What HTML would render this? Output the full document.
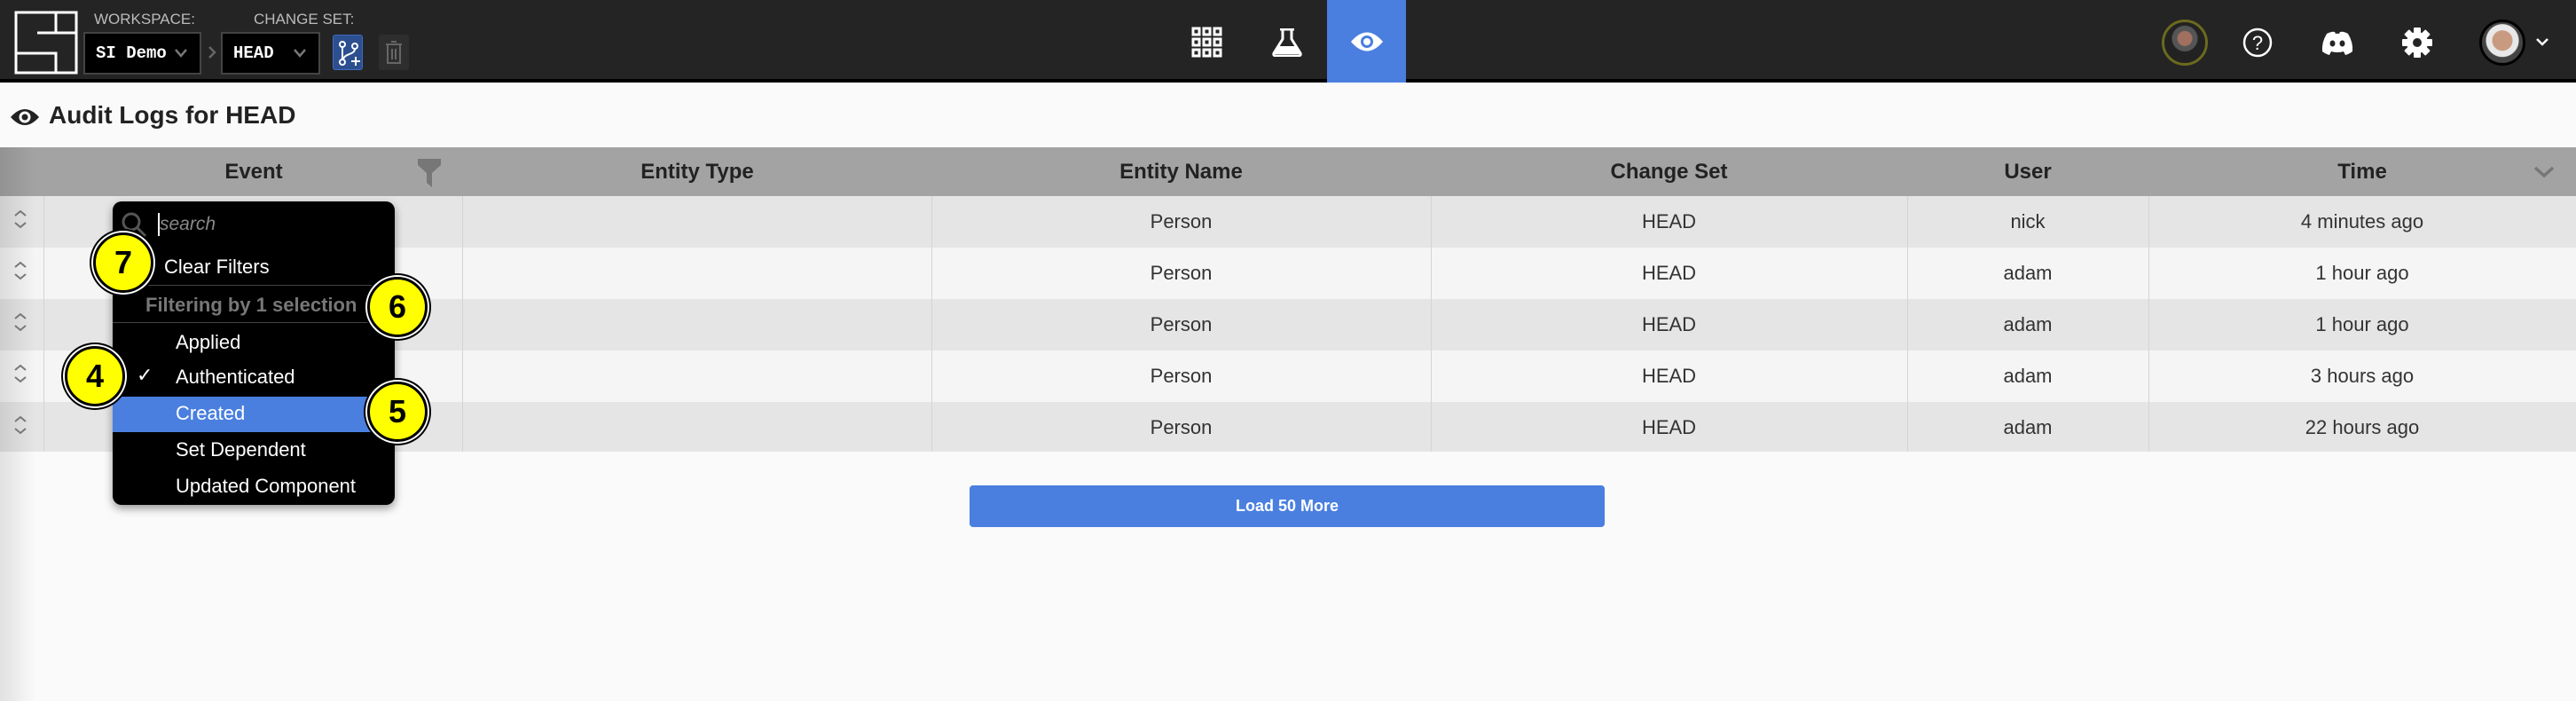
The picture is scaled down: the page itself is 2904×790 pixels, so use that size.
<!DOCTYPE html>
<html><head><meta charset="utf-8"><style>
*{box-sizing:border-box;margin:0;padding:0}
body{width:2904px;height:790px;overflow:hidden;background:#fafafa;font-family:"Liberation Sans",sans-serif;position:relative}
.abs{position:absolute}
.top{left:0;top:0;width:2904px;height:93px;background:#242424;border-bottom:4px solid #000}
.lbl{color:#bbb;font-size:17px;top:12px}
.sel{top:36px;height:48px;background:#000;border:2px solid #444;color:#fff;font-family:"Liberation Mono",monospace;font-weight:bold;font-size:19px;line-height:44px;padding-left:12px}
.sel svg{position:absolute;right:14px;top:17px}
.hdr{top:166px;height:55px;left:0;width:2904px;background:#a3a3a3}
.ht{top:166px;height:55px;line-height:55px;font-size:24px;font-weight:bold;color:#222;text-align:center}
.row{left:0;width:2904px;height:58px}
.cell{height:58px;line-height:58px;font-size:22px;color:#333;text-align:center}
.vl{width:1px;background:#d4d4d4;top:221px;height:288px}
.dd{left:127px;top:227px;width:318px;height:342px;background:#000;border-radius:10px;box-shadow:0 4px 10px rgba(0,0,0,.4)}
.it{color:#fff;font-size:22px;left:198px}
.circ{width:68px;height:68px;border-radius:50%;background:#ff0;border:3px solid #000;box-shadow:0 0 0 2px #fff,0 0 0 4px #000;font-weight:bold;font-size:36px;line-height:62px;text-align:center;color:#000}
</style></head><body>
<div class="abs top"></div>
<svg class="abs" style="left:0;top:0" width="100" height="93"><g fill="none" stroke="#fff" stroke-width="3"><rect x="18" y="14" width="68" height="68"/><path d="M63 14V37M42 37H86M18 60H63V82"/></g></svg>
<div class="abs lbl" style="left:106px">WORKSPACE:</div>
<div class="abs lbl" style="left:286px">CHANGE SET:</div>
<div class="abs sel" style="left:94px;width:133px">SI Demo<svg width="14" height="10"><path d="M1 1L7 8L13 1" fill="none" stroke="#777" stroke-width="2.5"/></svg></div>
<svg class="abs" style="left:234px;top:52px" width="10" height="14"><path d="M2 1L8 7L2 13" fill="none" stroke="#666" stroke-width="2.5"/></svg>
<div class="abs sel" style="left:249px;width:112px">HEAD<svg width="14" height="10"><path d="M1 1L7 8L13 1" fill="none" stroke="#777" stroke-width="2.5"/></svg></div>
<div class="abs" style="left:375px;top:39px;width:34px;height:40px;background:#2c4f8f;border:1px solid #3f6bc0;border-radius:3px"><svg width="34" height="40"><g fill="none" stroke="#fff" stroke-width="2"><circle cx="10" cy="10" r="3"/><circle cx="10" cy="30" r="3"/><circle cx="24" cy="12" r="3"/><path d="M10 13V27M24 15C24 22 12 20 11 27M20 29H30M25 24V34"/></g></svg></div>
<div class="abs" style="left:427px;top:39px;width:34px;height:40px;background:#2e2e2e;border-radius:3px"><svg width="34" height="40"><g fill="none" stroke="#666" stroke-width="2"><path d="M8 11H26M14 8H20M10 11V32H24V11M15 16V28M19 16V28"/></g></svg></div>
<!-- center icons -->
<svg class="abs" style="left:1343px;top:30px" width="36" height="36"><g fill="none" stroke="#fff" stroke-width="3"><rect x="2" y="2" width="7" height="7"/><rect x="14" y="2" width="7" height="7"/><rect x="26" y="2" width="7" height="7"/><rect x="2" y="14" width="7" height="7"/><rect x="14" y="14" width="7" height="7"/><rect x="26" y="14" width="7" height="7"/><rect x="2" y="26" width="7" height="7"/><rect x="14" y="26" width="7" height="7"/><rect x="26" y="26" width="7" height="7"/></g></svg>
<svg class="abs" style="left:1434px;top:32px" width="34" height="32"><path d="M9 1H25M12 1V12L2 28Q1 31 5 31H29Q33 31 32 28L22 12V1" fill="none" stroke="#fff" stroke-width="3"/><path d="M7 20H27L31 29H3Z" fill="#fff"/></svg>
<div class="abs" style="left:1496px;top:0;width:89px;height:93px;background:#4a7fe0"></div>
<svg class="abs" style="left:1522px;top:34px" width="38" height="26"><path d="M1 13Q19 -8 37 13Q19 34 1 13Z" fill="#fff"/><circle cx="19" cy="13" r="7" fill="#4a7fe0"/><circle cx="19" cy="13" r="4" fill="#fff"/></svg>
<!-- right -->
<div class="abs" style="left:2437px;top:22px;width:52px;height:52px;border-radius:50%;border:3px solid #6b6a1e;background:radial-gradient(circle at 50% 40%,#a07060 0 8px,#555 9px 14px,#222 15px)"></div>
<svg class="abs" style="left:2528px;top:31px" width="34" height="34"><circle cx="17" cy="17" r="15" fill="none" stroke="#fff" stroke-width="2.5"/><text x="17" y="25" font-size="22" fill="#fff" text-anchor="middle" font-family="Liberation Sans">?</text></svg>
<svg class="abs" style="left:2617px;top:34px" width="36" height="28"><path d="M6 4Q12 1 15 2L16 4Q18 3.5 20 4L21 2Q25 1 30 4Q36 14 35 24Q31 27 27 28L25 24Q22 25 18 25Q14 25 11 24L9 28Q5 27 1 24Q0 14 6 4Z" fill="#fff"/><ellipse cx="12.5" cy="15" rx="3" ry="3.5" fill="#242424"/><ellipse cx="23.5" cy="15" rx="3" ry="3.5" fill="#242424"/></svg>
<svg class="abs" style="left:2707px;top:30px" width="36" height="36"><g transform="translate(18 18)" fill="#fff"><circle r="12"/><g id="t"><rect x="-4" y="-17" width="8" height="8" rx="1"/></g><use href="#t" transform="rotate(45)"/><use href="#t" transform="rotate(90)"/><use href="#t" transform="rotate(135)"/><use href="#t" transform="rotate(180)"/><use href="#t" transform="rotate(225)"/><use href="#t" transform="rotate(270)"/><use href="#t" transform="rotate(315)"/><circle r="5" fill="#242424"/></g></svg>
<div class="abs" style="left:2795px;top:22px;width:52px;height:52px;border-radius:50%;border:3px solid #000;background:radial-gradient(circle at 50% 45%,#c89a80 0 11px,#e8e8e8 12px 18px,#444 19px)"></div>
<svg class="abs" style="left:2858px;top:42px" width="16" height="10"><path d="M2 2L8 8L14 2" fill="none" stroke="#fff" stroke-width="2.5"/></svg>
<!-- title -->
<svg class="abs" style="left:11px;top:121px" width="34" height="22"><path d="M1 11Q17 -7 33 11Q17 29 1 11Z" fill="#222"/><circle cx="17" cy="11" r="6.5" fill="#fafafa"/><circle cx="17" cy="11" r="3.5" fill="#222"/></svg>
<div class="abs" style="left:55px;top:114px;font-size:28px;font-weight:bold;color:#222">Audit Logs for HEAD</div>
<!-- table -->
<div class="abs hdr"></div>
<div class="abs ht" style="left:50px;width:472px">Event</div>
<svg class="abs" style="left:470px;top:178px" width="28" height="34"><path d="M1 1H27V8L17 17V33L11 28V17L1 8Z" fill="#777"/></svg>
<div class="abs ht" style="left:522px;width:528px">Entity Type</div>
<div class="abs ht" style="left:1050px;width:563px">Entity Name</div>
<div class="abs ht" style="left:1613px;width:537px">Change Set</div>
<div class="abs ht" style="left:2150px;width:272px">User</div>
<div class="abs ht" style="left:2422px;width:482px">Time</div>
<svg class="abs" style="left:2856px;top:187px" width="24" height="14"><path d="M2 2L12 11L22 2" fill="none" stroke="#777" stroke-width="3.5"/></svg>

<div class="abs row" style="top:221px;background:#e5e5e5"></div>
<div class="abs row" style="top:279px;background:#f5f5f5"></div>
<div class="abs row" style="top:337px;background:#e5e5e5"></div>
<div class="abs row" style="top:395px;background:#f5f5f5"></div>
<div class="abs row" style="top:453px;background:#e5e5e5;height:56px"></div>
<div class="abs" style="left:0;top:166px;width:40px;height:624px;background:linear-gradient(90deg,rgba(0,0,0,.1),rgba(0,0,0,0))"></div>
<div class="abs vl" style="left:49px"></div>
<div class="abs vl" style="left:521px"></div>
<div class="abs vl" style="left:1050px"></div>
<div class="abs vl" style="left:1613px"></div>
<div class="abs vl" style="left:2150px"></div>
<div class="abs vl" style="left:2422px"></div>
<svg class="abs" style="left:14px;top:236px" width="18" height="260"><g fill="none" stroke="#777" stroke-width="2"><path d="M3 7L9 2L15 7M3 15L9 20L15 15"/><path d="M3 65L9 60L15 65M3 73L9 78L15 73"/><path d="M3 123L9 118L15 123M3 131L9 136L15 131"/><path d="M3 181L9 176L15 181M3 189L9 194L15 189"/><path d="M3 239L9 234L15 239M3 247L9 252L15 247"/></g></svg>

<div class="abs" style="top:221px;left:0">
<div class="abs cell" style="left:1050px;width:563px;top:0">Person</div><div class="abs cell" style="left:1613px;width:537px;top:0">HEAD</div><div class="abs cell" style="left:2150px;width:272px;top:0">nick</div><div class="abs cell" style="left:2422px;width:482px;top:0">4 minutes ago</div>
<div class="abs cell" style="left:1050px;width:563px;top:58px">Person</div><div class="abs cell" style="left:1613px;width:537px;top:58px">HEAD</div><div class="abs cell" style="left:2150px;width:272px;top:58px">adam</div><div class="abs cell" style="left:2422px;width:482px;top:58px">1 hour ago</div>
<div class="abs cell" style="left:1050px;width:563px;top:116px">Person</div><div class="abs cell" style="left:1613px;width:537px;top:116px">HEAD</div><div class="abs cell" style="left:2150px;width:272px;top:116px">adam</div><div class="abs cell" style="left:2422px;width:482px;top:116px">1 hour ago</div>
<div class="abs cell" style="left:1050px;width:563px;top:174px">Person</div><div class="abs cell" style="left:1613px;width:537px;top:174px">HEAD</div><div class="abs cell" style="left:2150px;width:272px;top:174px">adam</div><div class="abs cell" style="left:2422px;width:482px;top:174px">3 hours ago</div>
<div class="abs cell" style="left:1050px;width:563px;top:232px">Person</div><div class="abs cell" style="left:1613px;width:537px;top:232px">HEAD</div><div class="abs cell" style="left:2150px;width:272px;top:232px">adam</div><div class="abs cell" style="left:2422px;width:482px;top:232px">22 hours ago</div>
</div>

<div class="abs" style="left:1093px;top:547px;width:716px;height:47px;background:#4a7fe0;border-radius:4px;color:#fff;font-weight:bold;font-size:18px;line-height:47px;text-align:center">Load 50 More</div>

<!-- dropdown -->
<div class="abs dd"></div>
<svg class="abs" style="left:136px;top:238px" width="32" height="32"><circle cx="12" cy="12" r="9" fill="none" stroke="#555" stroke-width="3"/><path d="M19 19L28 28" stroke="#555" stroke-width="3"/></svg>
<div class="abs" style="left:178px;top:240px;width:2px;height:26px;background:#fff"></div>
<div class="abs" style="left:180px;top:241px;color:#888;font-style:italic;font-size:21px">search</div>
<div class="abs it" style="left:185px;top:288px">Clear Filters</div>
<div class="abs" style="left:165px;top:321px;width:255px;height:1px;background:#444"></div>
<div class="abs" style="left:164px;top:331px;color:#777;font-weight:bold;font-size:22px">Filtering by 1 selection</div>
<div class="abs" style="left:127px;top:363px;width:300px;height:1px;background:#444"></div>
<div class="abs it" style="top:373px">Applied</div>
<div class="abs" style="left:154px;top:410px;color:#fff;font-size:22px">✓</div>
<div class="abs it" style="top:412px">Authenticated</div>
<div class="abs" style="left:127px;top:447px;width:318px;height:40px;background:#4a7fe0"></div>
<div class="abs it" style="top:453px">Created</div>
<div class="abs it" style="top:494px">Set Dependent</div>
<div class="abs it" style="top:535px">Updated Component</div>

<div class="abs circ" style="left:105px;top:262px">7</div>
<div class="abs circ" style="left:414px;top:312px">6</div>
<div class="abs circ" style="left:73px;top:390px">4</div>
<div class="abs circ" style="left:414px;top:430px">5</div>
</body></html>
